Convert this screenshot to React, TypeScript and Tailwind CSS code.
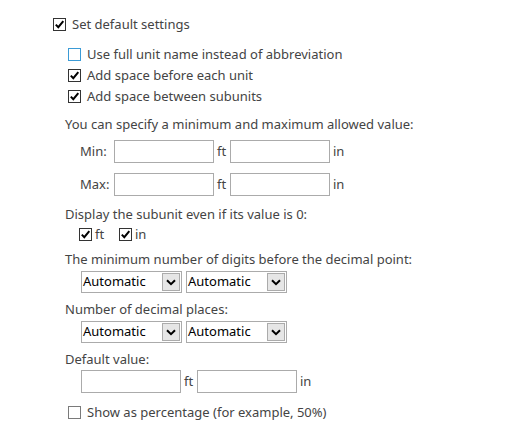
import type { ReactNode } from 'react';

function Check({ checked, tone = 'dark' }: { checked: boolean; tone?: 'dark' | 'blue' | 'gray' }) {
  const border =
    tone === 'blue' ? 'border-[#3b9bd6]' : tone === 'gray' ? 'border-[#7a7a7a]' : 'border-[#333333]';
  return (
    <span className={`flex h-[13px] w-[13px] shrink-0 items-center justify-center border bg-white ${border}`}>
      {checked && (
        <svg width="11" height="11" viewBox="0 0 11 11">
          <path d="M1.8 5.6 L4.3 8.2 L9.3 2.2" fill="none" stroke="#000" strokeWidth="2" />
        </svg>
      )}
    </span>
  );
}

function CheckRow({ checked, tone, children }: { checked: boolean; tone?: 'dark' | 'blue' | 'gray'; children: ReactNode }) {
  return (
    <div className="flex h-[21px] items-center gap-[6px]">
      <Check checked={checked} tone={tone} />
      <span>{children}</span>
    </div>
  );
}

function TextBox() {
  return <div className="h-[23px] w-[100px] border border-[#ababab] bg-white" />;
}

function Select() {
  return (
    <div className="flex h-[22px] w-[101px] items-center justify-between border border-[#ababab] bg-white pl-[1px]">
      <span className="text-[#000]">Automatic</span>
      <span className="mr-[1px] flex h-[18px] w-[18px] items-center justify-center border border-[#ababab] bg-[#e6e6e6]">
        <svg width="10" height="7" viewBox="0 0 10 7">
          <path d="M1 1.2 L5 5.2 L9 1.2" fill="none" stroke="#000" strokeWidth="2" />
        </svg>
      </span>
    </div>
  );
}

function Label({ children, className = '' }: { children: ReactNode; className?: string }) {
  return <div className={`flex h-[21px] items-center ${className}`}>{children}</div>;
}

export default function App() {
  return (
    <div
      className="h-[435px] w-[531px] overflow-hidden bg-white pl-[53px] pt-[14px] text-[13px] text-[#444444]"
      style={{ fontFamily: '"Noto Sans", sans-serif' }}
    >
      <CheckRow checked>Set default settings</CheckRow>

      <div className="mt-[9px] ml-[15px]">
        <CheckRow checked={false} tone="blue">Use full unit name instead of abbreviation</CheckRow>
        <CheckRow checked>Add space before each unit</CheckRow>
        <CheckRow checked>Add space between subunits</CheckRow>
      </div>

      <Label className="mt-[7px] ml-[12px]">You can specify a minimum and maximum allowed value:</Label>

      <div className="mt-[5px] ml-[27px] flex h-[23px] items-center">
        <span className="w-[34px]">Min:</span>
        <TextBox />
        <span className="w-[16px] pl-[3px]">ft</span>
        <TextBox />
        <span className="pl-[3px]">in</span>
      </div>
      <div className="mt-[10px] ml-[27px] flex h-[23px] items-center">
        <span className="w-[34px]">Max:</span>
        <TextBox />
        <span className="w-[16px] pl-[3px]">ft</span>
        <TextBox />
        <span className="pl-[3px]">in</span>
      </div>

      <Label className="mt-[8px] ml-[12px]">Display the subunit even if its value is 0:</Label>
      <div className="mt-[2px] ml-[26px] flex h-[15px] items-center">
        <Check checked />
        <span className="ml-[3px] w-[24px]">ft</span>
        <Check checked />
        <span className="ml-[3px]">in</span>
      </div>

      <Label className="mt-[7px] ml-[12px]">The minimum number of digits before the decimal point:</Label>
      <div className="mt-[1px] ml-[28px] flex gap-[4px]">
        <Select />
        <Select />
      </div>

      <Label className="mt-[6px] ml-[12px]">Number of decimal places:</Label>
      <div className="mt-[1px] ml-[28px] flex gap-[4px]">
        <Select />
        <Select />
      </div>

      <Label className="mt-[6px] ml-[12px]">Default value:</Label>
      <div className="ml-[28px] flex h-[23px] items-center">
        <TextBox />
        <span className="w-[16px] pl-[3px]">ft</span>
        <TextBox />
        <span className="pl-[3px]">in</span>
      </div>

      <div className="mt-[9px] ml-[15px]">
        <CheckRow checked={false} tone="gray">Show as percentage (for example, 50%)</CheckRow>
      </div>
    </div>
  );
}
